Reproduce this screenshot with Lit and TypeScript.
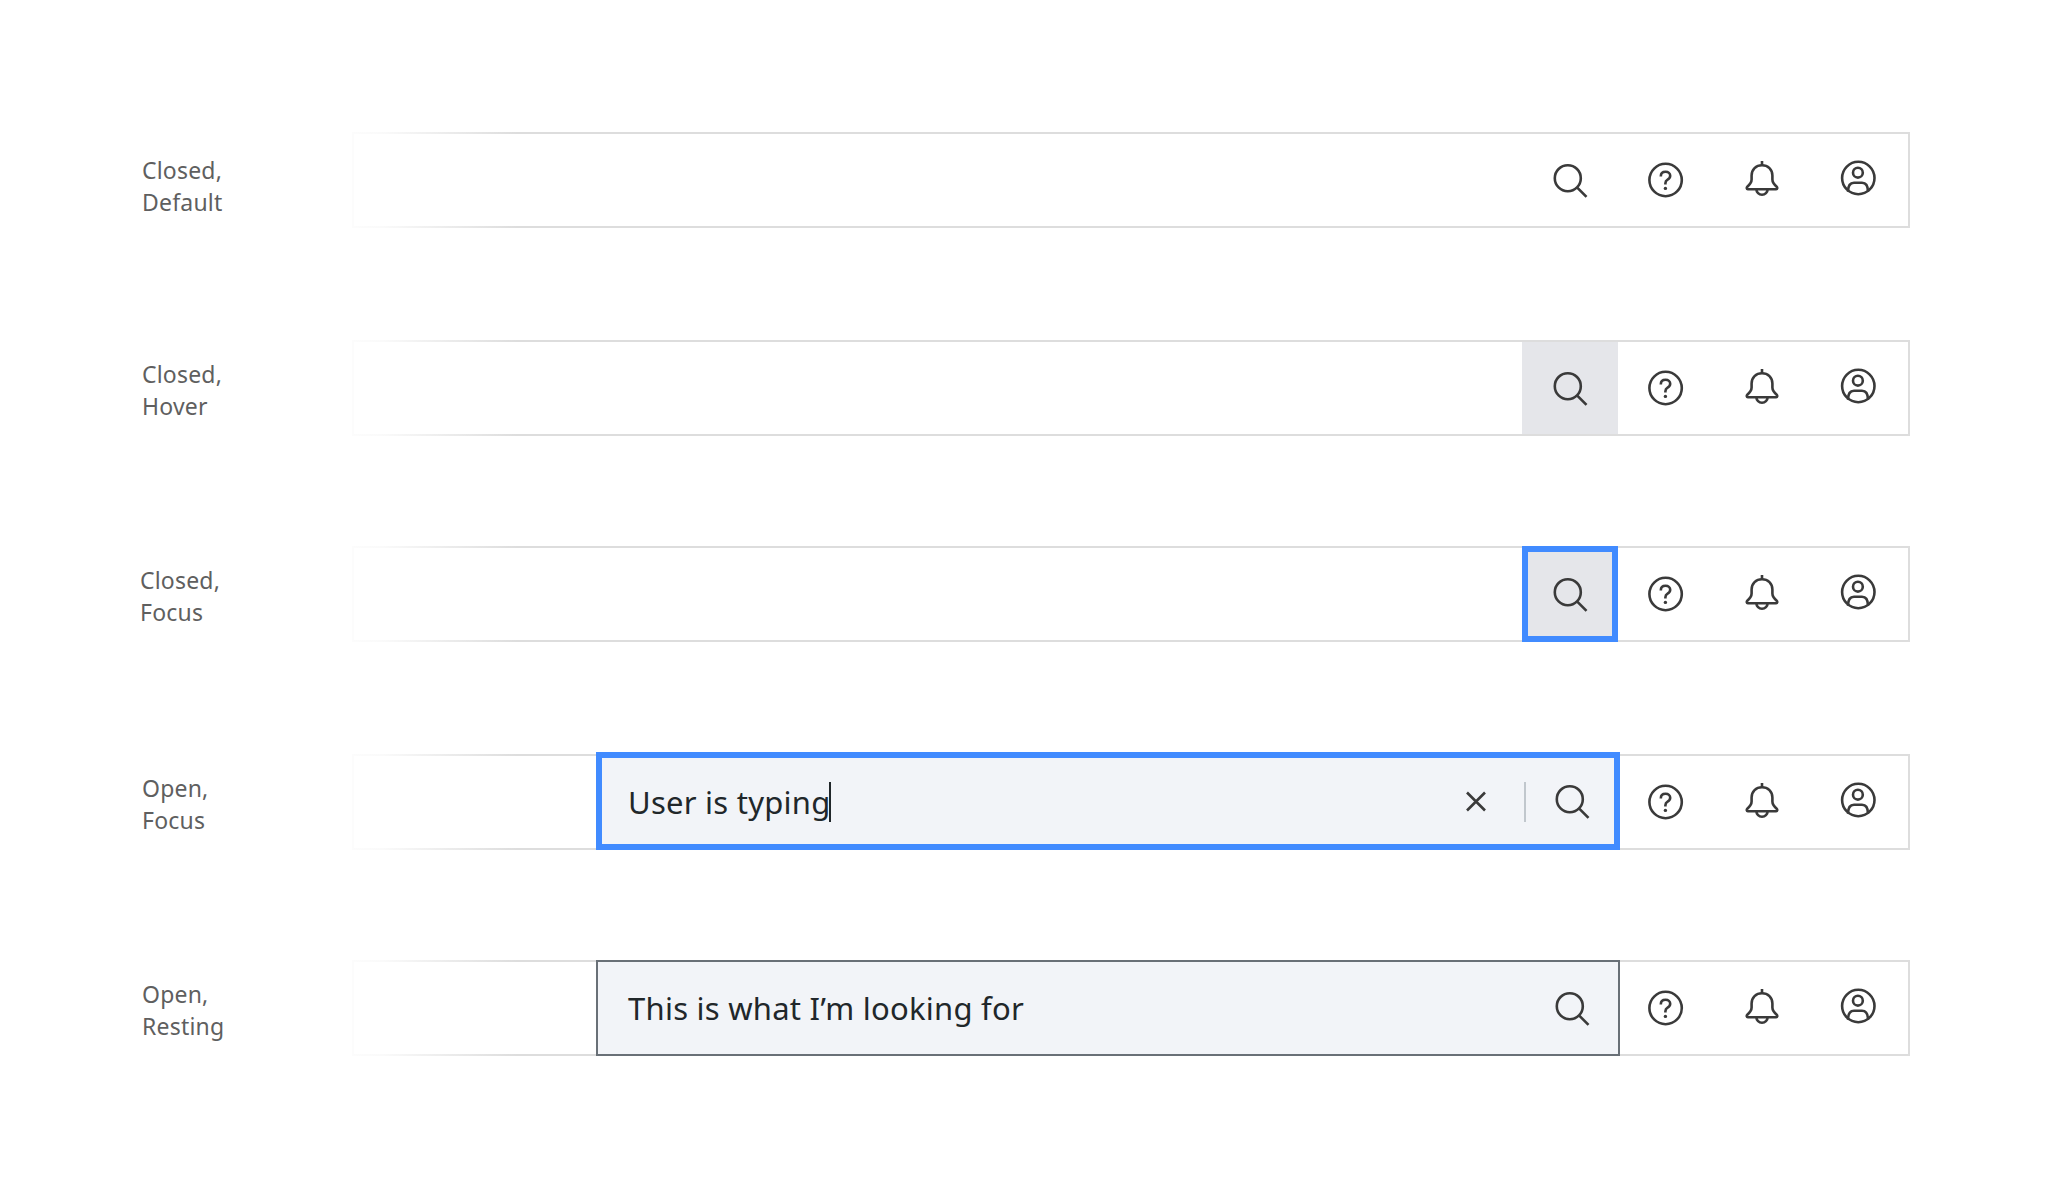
import { LitElement, html, css } from "lit";
import { customElement } from "lit/decorators.js";

const icon = (kind: string) => {
  if (kind === "search")
    return html`<svg class="ic" width="40" height="40" viewBox="0 0 40 40">
      <circle cx="17.8" cy="18.2" r="13" />
      <path d="M27 27.4 L36.5 36.9" />
    </svg>`;
  if (kind === "close")
    return html`<svg class="ic" width="24" height="24" viewBox="0 -1 24 24"><path d="M3 2.500 L21 20.500 M21 2.500 L3 20.500" /></svg>`;
  if (kind === "help")
    return html`<svg class="ic" width="40" height="40" viewBox="0 0 40 40">
      <circle cx="19.600" cy="20" r="16.200" />
      <path d="M14.800 16.400 c0-2.900 2-4.600 4.800-4.600 c2.700 0 4.600 1.700 4.600 4 c0 2-1 3-2.600 3.900 c-1.400.8-2.200 1.600-2.200 3.500 v1.200" />
      <circle class="dot" cx="19.400" cy="28.400" r="1.700" />
    </svg>`;
  if (kind === "bell")
    return html`<svg class="ic" width="40" height="40" viewBox="0 0 40 40">
      <path d="M20 1 V5" />
      <path d="M5.800 29.200 C4.600 29.200 4.400 27.600 5.300 26.800 C7.800 24.600 9.600 23 9.600 19.600 V15.500 C9.600 9.400 14 5.200 20 5.200 S30.400 9.400 30.400 15.500 V19.600 C30.400 23 32.200 24.600 34.700 26.800 C35.600 27.600 35.400 29.200 34.200 29.200 Z" />
      <path d="M14.400 29.200 a5.600 5.600 0 0 0 11.200 0" />
    </svg>`;
  return html`<svg class="ic" width="40" height="40" viewBox="0 0 40 40">
    <circle cx="20.300" cy="18" r="16.200" />
    <circle cx="19.900" cy="12.700" r="4.900" />
    <path d="M10 31.800 C10 26.500 12 22.800 16 22.800 h8 C28 22.800 30 26.500 30 31.800" />
  </svg>`;
};

type Row = {
  label: [string, string];
  state: "default" | "hover" | "focus" | "open-focus" | "open";
  text?: string;
  indent?: boolean;
  low?: boolean;
};

const rows: Row[] = [
  { label: ["Closed,", "Default"], state: "default", low: true },
  { label: ["Closed,", "Hover"], state: "hover" },
  { label: ["Closed,", "Focus"], state: "focus", indent: true },
  { label: ["Open,", "Focus"], state: "open-focus", text: "User is typing" },
  { label: ["Open,", "Resting"], state: "open", text: "This is what I’m looking for" },
];

@customElement("app-root")
export class AppRoot extends LitElement {
  static styles = css`
    :host {
      display: block;
      width: 2048px;
      height: 1196px;
      background: #fff;
      font-family: "Noto Sans", "Liberation Sans", sans-serif;
      overflow: hidden;
    }
    .page {
      display: flex;
      flex-direction: column;
      padding: 132px 138px 0 142px;
    }
    .row {
      display: flex;
      align-items: center;
      height: 96px;
      margin-bottom: 110px;
    }
    .row:nth-child(odd) {
      margin-bottom: 112px;
    }
    .label {
      width: 210px;
      flex: none;
      font-size: 23px;
      line-height: 32px;
      color: #5f5f5f;
      margin-top: 4px;
      letter-spacing: 0.2px;
    }
    .label.low {
      margin-top: 12px;
    }
    .label.indent {
      margin-left: -2px;
      width: 212px;
    }
    .label span {
      display: block;
    }
    .bar {
      flex: 1;
      height: 96px;
      box-sizing: border-box;
      display: flex;
      justify-content: flex-end;
      border: 2px solid;
      border-image: linear-gradient(90deg, #fcfcfc 0, #fafafa 30px, #dddddd 165px, #dddddd 100%) 2;
      padding-right: 2px;
    }
    .cell {
      width: 96px;
      flex: none;
      display: flex;
      align-items: center;
      justify-content: center;
      box-sizing: border-box;
    }
    .ic {
      display: block;
      fill: none;
      stroke: #3a3a3a;
      stroke-width: 2.6;
    }
    .ic .dot {
      fill: #3a3a3a;
      stroke: none;
    }
    .cell.hover {
      background: #e5e6ea;
    }
    .cell.focus {
      background: #e5e6ea;
      margin: -2px 0;
      border: 6px solid #418bff;
    }
    .field {
      width: 1024px;
      flex: none;
      margin: -2px -2px -2px 0;
      box-sizing: border-box;
      background: #f2f4f8;
      display: flex;
      align-items: center;
      padding: 0 26px 0 30px;
      font-size: 31px;
      color: #21272a;
      letter-spacing: 0.25px;
      border: 2px solid #697077;
    }
    .field.focused {
      margin-top: -4px;
      border: 6px solid #418bff;
      padding: 0 22px 0 26px;
    }
    .text {
      flex: 1;
      display: flex;
      align-items: center;
      white-space: nowrap;
    }
    .field.focused .text {
      padding-top: 2px;
    }
    .caret {
      width: 2px;
      height: 40px;
      background: #21272a;
      margin-left: -2px;
    }
    .divider {
      width: 2px;
      height: 40px;
      background: #c1c7cd;
      margin: 2px 26px 0 36px;
    }
  `;

  private renderField(r: Row) {
    const focused = r.state === "open-focus";
    return html`<div class="field ${focused ? "focused" : ""}">
      <div class="text">${r.text}${focused ? html`<i class="caret"></i>` : ""}</div>
      ${focused ? html`${icon("close")}<i class="divider"></i>` : ""}
      ${icon("search")}
    </div>`;
  }

  render() {
    return html`<div class="page">
      ${rows.map(
        (r) => html`<div class="row">
          <div class="label ${r.indent ? "indent" : ""} ${r.low ? "low" : ""}"><span>${r.label[0]}</span><span>${r.label[1]}</span></div>
          <div class="bar">
            ${r.text
              ? this.renderField(r)
              : html`<div class="cell ${r.state === "hover" ? "hover" : r.state === "focus" ? "focus" : ""}">${icon("search")}</div>`}
            <div class="cell">${icon("help")}</div>
            <div class="cell">${icon("bell")}</div>
            <div class="cell">${icon("user")}</div>
          </div>
        </div>`
      )}
    </div>`;
  }
}
